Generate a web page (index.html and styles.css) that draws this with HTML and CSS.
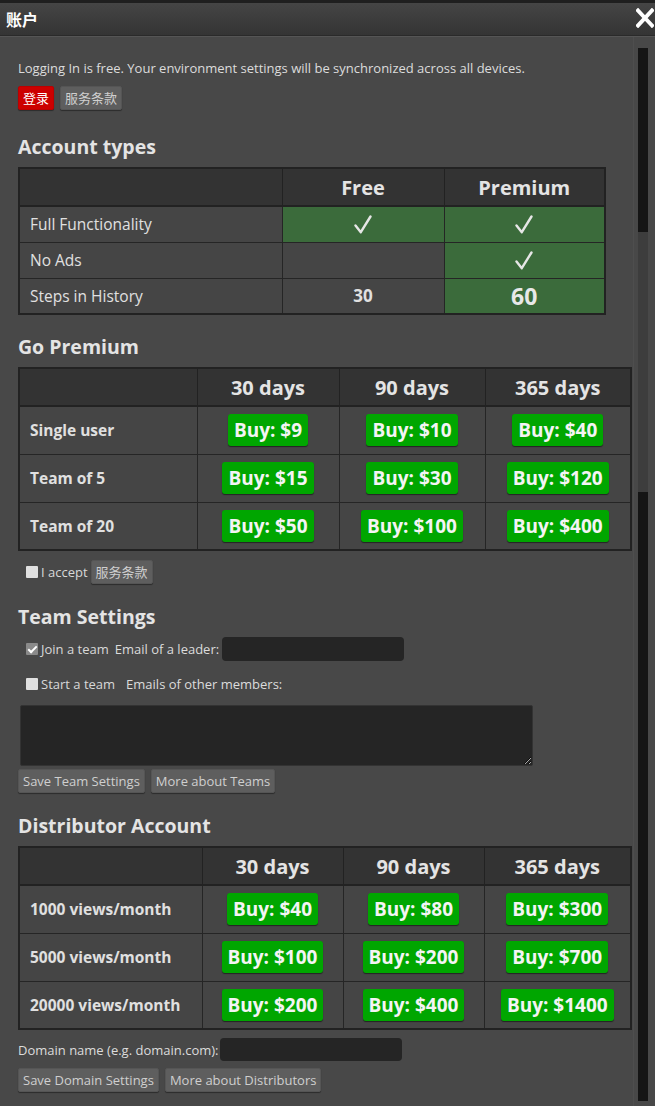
FILE: index.html
```html
<!DOCTYPE html>
<html lang="zh">
<head>
<meta charset="utf-8">
<title>账户</title>
<link rel="stylesheet" href="styles.css">
</head>
<body>
<div class="dialog">
  <div class="titlebar">
    <span class="title">账户</span>
    <span class="close" aria-label="close">
      <svg width="18" height="20" viewBox="0 0 18 20"><path d="M2 2.5 L16 17.5 M16 2.5 L2 17.5" stroke="#fff" stroke-width="4" stroke-linecap="square"/></svg>
    </span>
  </div>
  <div class="body">
    <div class="content">
      <p class="intro">Logging In is free. Your environment settings will be synchronized across all devices.</p>
      <div class="btnrow">
        <button class="btn red">登录</button>
        <button class="btn">服务条款</button>
      </div>

      <h2 class="first">Account types</h2>
      <table class="grid types">
        <thead>
          <tr><th class="c-label"></th><th class="c-free">Free</th><th class="c-prem">Premium</th></tr>
        </thead>
        <tbody>
          <tr><td class="label">Full Functionality</td><td class="yes"><svg class="tick" width="18" height="19" viewBox="0 0 18 19"><path d="M1.5 10.5 L6.8 17.2 L16.5 1.5" fill="none" stroke="#e6e6e6" stroke-width="2.4" stroke-linecap="round" stroke-linejoin="round"/></svg></td><td class="yes"><svg class="tick" width="18" height="19" viewBox="0 0 18 19"><path d="M1.5 10.5 L6.8 17.2 L16.5 1.5" fill="none" stroke="#e6e6e6" stroke-width="2.4" stroke-linecap="round" stroke-linejoin="round"/></svg></td></tr>
          <tr><td class="label">No Ads</td><td></td><td class="yes"><svg class="tick" width="18" height="19" viewBox="0 0 18 19"><path d="M1.5 10.5 L6.8 17.2 L16.5 1.5" fill="none" stroke="#e6e6e6" stroke-width="2.4" stroke-linecap="round" stroke-linejoin="round"/></svg></td></tr>
          <tr><td class="label">Steps in History</td><td class="num">30</td><td class="yes big">60</td></tr>
        </tbody>
      </table>

      <h2 class="after-table">Go Premium</h2>
      <table class="grid prices">
        <thead>
          <tr><th class="p1"></th><th class="p2">30 days</th><th class="p3">90 days</th><th class="p4">365 days</th></tr>
        </thead>
        <tbody>
          <tr><td class="rowname">Single user</td><td><span class="buy">Buy: $9</span></td><td><span class="buy">Buy: $10</span></td><td><span class="buy">Buy: $40</span></td></tr>
          <tr><td class="rowname">Team of 5</td><td><span class="buy">Buy: $15</span></td><td><span class="buy">Buy: $30</span></td><td><span class="buy">Buy: $120</span></td></tr>
          <tr><td class="rowname">Team of 20</td><td><span class="buy">Buy: $50</span></td><td><span class="buy">Buy: $100</span></td><td><span class="buy">Buy: $400</span></td></tr>
        </tbody>
      </table>
      <div class="accept">
        <label class="chk"><input type="checkbox"> I accept</label>
        <button class="btn">服务条款</button>
      </div>

      <h2>Team Settings</h2>
      <div class="field join">
        <label class="chk"><input type="checkbox" checked>Join a team</label>
        <span class="lbl">Email of a leader:</span>
        <input type="text" class="text">
      </div>
      <div class="field start">
        <label class="chk"><input type="checkbox">Start a team</label>
        <span class="lbl">Emails of other members:</span>
      </div>
      <textarea class="members"></textarea>
      <div class="btnrow tight">
        <button class="btn">Save Team Settings</button>
        <button class="btn">More about Teams</button>
      </div>

      <h2>Distributor Account</h2>
      <table class="grid prices dist">
        <thead>
          <tr><th class="d1"></th><th class="d2">30 days</th><th class="d3">90 days</th><th class="d4">365 days</th></tr>
        </thead>
        <tbody>
          <tr><td class="rowname">1000 views/month</td><td><span class="buy">Buy: $40</span></td><td><span class="buy">Buy: $80</span></td><td><span class="buy">Buy: $300</span></td></tr>
          <tr><td class="rowname">5000 views/month</td><td><span class="buy">Buy: $100</span></td><td><span class="buy">Buy: $200</span></td><td><span class="buy">Buy: $700</span></td></tr>
          <tr><td class="rowname">20000 views/month</td><td><span class="buy">Buy: $200</span></td><td><span class="buy">Buy: $400</span></td><td><span class="buy">Buy: $1400</span></td></tr>
        </tbody>
      </table>
      <div class="field domain">
        <span class="lbl">Domain name (e.g. domain.com):</span>
        <input type="text" class="text">
      </div>
      <div class="btnrow tight2">
        <button class="btn">Save Domain Settings</button>
        <button class="btn">More about Distributors</button>
      </div>
    </div>
    <div class="scrollcol">
      <div class="track"><div class="thumb"></div></div>
    </div>
  </div>
</div>
</body>
</html>
```
FILE: styles.css
```css
* { box-sizing: border-box; }
html, body { margin: 0; padding: 0; }
body {
  background: #484848;
  font-family: "Open Sans", "Noto Sans CJK SC", sans-serif;
  color: #dcdcdc;
  width: 655px;
  height: 1106px;
  overflow: hidden;
}
.dialog { display: flex; flex-direction: column; height: 1106px; }
.titlebar {
  height: 36px;
  flex: none;
  display: flex;
  align-items: center;
  justify-content: space-between;
  border-top: 3px solid #1f1f1f;
  border-bottom: 1px solid #2a2a2a;
  background: linear-gradient(#454545, #343434);
  padding: 0 1px 0 6px;
}
.title {
  font-family: "Noto Sans CJK SC", sans-serif;
  font-weight: 700;
  font-size: 16px;
  color: #fff;
}
.close { display: flex; margin-top: -3px; }
.body { flex: 1; display: flex; border-top: 1px solid #555; }
.content {
  flex: 1;
  padding: 23px 0 0 18px;
  border-right: 1px solid #4e4e4e;
  margin-right: 4px;
}
.scrollcol { width: 17px; flex: none; padding: 11px 7px 5px 0; display: flex; }
.track { width: 10px; background: #151515; flex: 1; }
.thumb { height: 260px; margin-top: 184px; background: #3d3d3d; }

.intro { margin: 0; font-size: 13px; line-height: 17px; }
.btnrow { display: flex; gap: 6px; margin-top: 9px; }
.btn {
  font-family: "Open Sans", "Noto Sans CJK SC", sans-serif;
  font-size: 13px;
  line-height: 18px;
  color: #cfcfcf;
  background: #5e5e5e;
  border: 1px solid #555;
  border-radius: 2px;
  padding: 2px 4px;
  box-shadow: 0 1px 1px rgba(0,0,0,0.4);
}
.btn.red { background: #cc0000; color: #fff; border-color: #b00; }

h2 {
  font-size: 19.5px;
  font-weight: 700;
  color: #e4e4e4;
  line-height: 26px;
  margin: 20px 0 7px;
}
h2.first { margin-top: 24px; }
h2.after-table { margin-top: 19px; }

.grid { border-collapse: collapse; border: 2px solid #222; }
.grid th {
  background: #333;
  font-size: 20px;
  font-weight: 700;
  color: #e4e4e4;
  height: 38px;
  padding: 0;
  border: 1px solid #222;
  border-bottom-width: 2px;
}
.grid td { border: 1px solid #252525; padding: 0; background: #454545; text-align: center; }
.types { width: 588px; }
.types td { height: 36px; }
.types .c-label { width: 263px; }
.types .c-free { width: 162px; }
.types td.label { text-align: left; padding-left: 10px; font-size: 15.5px; color: #e0e0e0; }
.types td.yes { background: #3b6b3b; }
.tick { display: block; margin: 1px auto 0; }
.types td.num { font-size: 17px; font-weight: 700; color: #e0e0e0; }
.types td.big { font-size: 23px; font-weight: 700; color: #e8e8e8; }

.prices { width: 614px; }
.prices td { height: 48px; }
.prices td.rowname { text-align: left; padding-left: 10px; font-size: 15.5px; font-weight: 700; color: #e0e0e0; }
.p1 { width: 178px; } .p2 { width: 142px; } .p3 { width: 146px; }
.d1 { width: 183px; } .d2 { width: 141px; } .d3 { width: 141px; }
.buy {
  display: inline-block;
  background: #00a600;
  color: #f4f4f4;
  font-size: 19px;
  font-weight: 700;
  line-height: 28px;
  padding: 2px 6px;
  border-radius: 3px;
  box-shadow: 0 1px 1px rgba(0,0,0,0.5);
}

.accept { display: flex; align-items: center; gap: 3px; margin: 9px 0 0 8px; }
.chk { display: inline-flex; align-items: center; font-size: 13px; color: #d8d8d8; }
.chk input {
  appearance: none;
  -webkit-appearance: none;
  width: 12px; height: 12px;
  margin: 0 3px 0 0;
  background: #e0e0e0;
  border-radius: 1px;
  position: relative;
}
.chk input:checked { background: #8a8a8a; }
.chk input:checked::after {
  content: "";
  position: absolute;
  left: 4px; top: 1px;
  width: 3px; height: 7px;
  border: solid #fff;
  border-width: 0 2px 2px 0;
  transform: rotate(45deg);
}
.field { display: flex; align-items: center; font-size: 13px; margin-left: 8px; }
.field .lbl { margin-left: 6px; }
.field.start .lbl { margin-left: 11px; }
.field.join { height: 24px; margin-top: 7px; }
.field.start { height: 24px; margin-top: 11px; }
.text {
  width: 182px; height: 24px;
  background: #252525;
  border: none;
  border-radius: 4px;
  margin-left: 3px;
}
.members {
  display: block;
  width: 513px; height: 61px;
  margin: 9px 0 0 2px;
  background: #252525;
  border: 1px solid #333;
  border-radius: 2px;
  resize: both;
}
.btnrow.tight { margin-top: 3px; }
.field.domain { margin: 8px 0 0 0; height: 23px; }
.field.domain .lbl { margin-left: 0; }
.field.domain .text { height: 23px; margin-left: 2px; }
.btnrow.tight2 { margin-top: 7px; }
```
